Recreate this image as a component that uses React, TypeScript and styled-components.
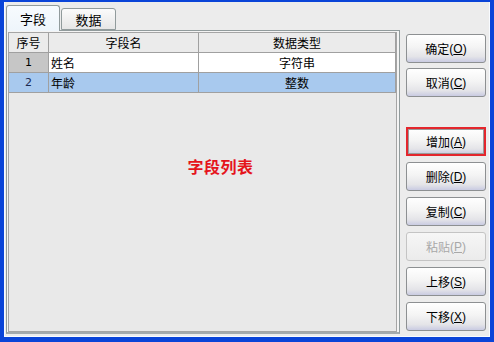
import React from "react";
import styled, { createGlobalStyle } from "styled-components";

const GlobalStyle = createGlobalStyle`
  html, body { margin: 0; padding: 0; background: #ececec; }
  * { box-sizing: border-box; }
`;

const CJK = `"Noto Sans CJK SC", "Liberation Sans", sans-serif`;

const Window = styled.div`
  width: 494px;
  height: 342px;
  border-style: solid;
  border-color: #0a44d8;
  border-width: 2px 4px 5px 4px;
  background: #ececec;
  box-shadow: inset 1px 0 0 #f8fbff, inset 0 -1px 0 #f8fbff, inset -1px 0 0 #f8fbff;
  display: flex;
  flex-direction: row;
  padding-left: 2px;
  font-family: ${CJK};
  font-size: 12px;
  color: #000;
`;

const LeftColumn = styled.div`
  width: 394px;
  margin-top: 3px;
  display: flex;
  flex-direction: column;
`;

const TabStrip = styled.div`
  height: 25px;
  display: flex;
  align-items: flex-end;
  gap: 1px;
  position: relative;
  z-index: 1;
`;

const Tab = styled.div<{ $active?: boolean }>`
  width: ${(p) => (p.$active ? 54 : 55)}px;
  height: ${(p) => (p.$active ? 26 : 22)}px;
  margin-bottom: ${(p) => (p.$active ? -1 : 0)}px;
  border: 1px solid #919b9c;
  border-bottom: ${(p) => (p.$active ? "none" : "1px solid #919b9c")};
  border-radius: 3px 3px 0 0;
  background: ${(p) =>
    p.$active
      ? "linear-gradient(#f7fbfe, #eef5fb)"
      : "linear-gradient(#fbfbfb, #e6e6e6)"};
  display: flex;
  align-items: center;
  justify-content: center;
  padding-top: ${(p) => (p.$active ? 0 : 1)}px;
  font-size: 13px;
`;

const Panel = styled.div`
  height: 304px;
  border: 1px solid #919b9c;
  border-bottom: 2px solid #a3aaad;
  background: #f4f4f4;
  padding: 1px 2px 0 1px;
  display: flex;
`;

const TableView = styled.div`
  flex: 1;
  border: 1px solid #a5a5a5;
  background: #e9e9e9;
  display: flex;
  flex-direction: column;
`;

const Grid = styled.div`
  display: grid;
  grid-template-columns: 40px 150px 1fr;
  grid-auto-rows: 20px;
`;

type CellKind = "head" | "rowhead" | "plain" | "selected";

const cellBg: Record<CellKind, string> = {
  head: "#ebebeb",
  rowhead: "#c6c6c6",
  plain: "#ffffff",
  selected: "#a8c9ee",
};

const Cell = styled.div<{ $kind: CellKind; $align?: "left" | "center"; $num?: boolean }>`
  background: ${(p) => cellBg[p.$kind]};
  border-right: 1px solid #a0a0a0;
  border-bottom: 1px solid #a0a0a0;
  display: flex;
  align-items: center;
  justify-content: ${(p) => (p.$align === "left" ? "flex-start" : "center")};
  padding-left: ${(p) => (p.$align === "left" ? 2 : 0)}px;
  font-family: ${(p) => (p.$num ? `"DejaVu Sans", sans-serif` : CJK)};
  font-size: ${(p) => (p.$num ? 11 : 12)}px;
  color: ${(p) => (p.$kind === "selected" && p.$num ? "#1a2a50" : "#000")};
  white-space: nowrap;
`;

const EmptyArea = styled.div`
  flex: 1;
  padding-top: 61px;
  padding-left: 36px;
  text-align: center;
`;

const RedLabel = styled.span`
  font-family: ${CJK};
  font-weight: bold;
  font-size: 16px;
  color: #e5141c;
  letter-spacing: 0.5px;
`;

const ButtonColumn = styled.div`
  width: 80px;
  margin-left: 6px;
  padding-top: 32px;
  display: flex;
  flex-direction: column;
`;

const ButtonGroup = styled.div<{ $gap: number; $top: number }>`
  display: flex;
  flex-direction: column;
  gap: ${(p) => p.$gap}px;
  margin-top: ${(p) => p.$top}px;
`;

const Button = styled.button<{ $marked?: boolean }>`
  width: 80px;
  height: 29px;
  padding: 0;
  border: ${(p) => (p.$marked ? "2px solid #e3262d" : "1px solid #8d9092")};
  border-radius: ${(p) => (p.$marked ? 0 : 3)}px;
  background: linear-gradient(#ffffff 0%, #f4f4f4 45%, #e4e4e8 80%, #c9cbe2 100%);
  box-shadow: ${(p) => (p.$marked ? "inset 0 0 0 1px #9a9a9a" : "none")};
  font-family: ${CJK};
  font-size: 12px;
  color: ${(p) => (p.disabled ? "#a8a8a8" : "#000")};
  display: flex;
  align-items: center;
  justify-content: center;
  cursor: default;
  &:disabled {
    border-color: #c4c4c4;
    background: linear-gradient(#f6f6f6, #ebebeb);
  }
`;

const Key = styled.span`
  font-family: "Liberation Sans", sans-serif;
  font-size: 12px;
  u { text-decoration: underline; }
`;

const Label = ({ text, k }: { text: string; k: string }) => (
  <>
    {text}
    <Key>
      (<u>{k}</u>)
    </Key>
  </>
);

export default function App() {
  return (
    <>
      <GlobalStyle />
      <Window>
        <LeftColumn>
          <TabStrip>
            <Tab $active>字段</Tab>
            <Tab>数据</Tab>
          </TabStrip>
          <Panel>
            <TableView>
              <Grid>
                <Cell $kind="head">序号</Cell>
                <Cell $kind="head">字段名</Cell>
                <Cell $kind="head">数据类型</Cell>
                <Cell $kind="rowhead" $num>1</Cell>
                <Cell $kind="plain" $align="left">姓名</Cell>
                <Cell $kind="plain">字符串</Cell>
                <Cell $kind="selected" $num>2</Cell>
                <Cell $kind="selected" $align="left">年龄</Cell>
                <Cell $kind="selected">整数</Cell>
              </Grid>
              <EmptyArea>
                <RedLabel>字段列表</RedLabel>
              </EmptyArea>
            </TableView>
          </Panel>
        </LeftColumn>
        <ButtonColumn>
          <ButtonGroup $gap={5} $top={0}>
            <Button><Label text="确定" k="O" /></Button>
            <Button><Label text="取消" k="C" /></Button>
          </ButtonGroup>
          <ButtonGroup $gap={6} $top={30}>
            <Button $marked><Label text="增加" k="A" /></Button>
            <Button><Label text="删除" k="D" /></Button>
            <Button><Label text="复制" k="C" /></Button>
            <Button disabled><Label text="粘贴" k="P" /></Button>
            <Button><Label text="上移" k="S" /></Button>
            <Button><Label text="下移" k="X" /></Button>
          </ButtonGroup>
        </ButtonColumn>
      </Window>
    </>
  );
}
